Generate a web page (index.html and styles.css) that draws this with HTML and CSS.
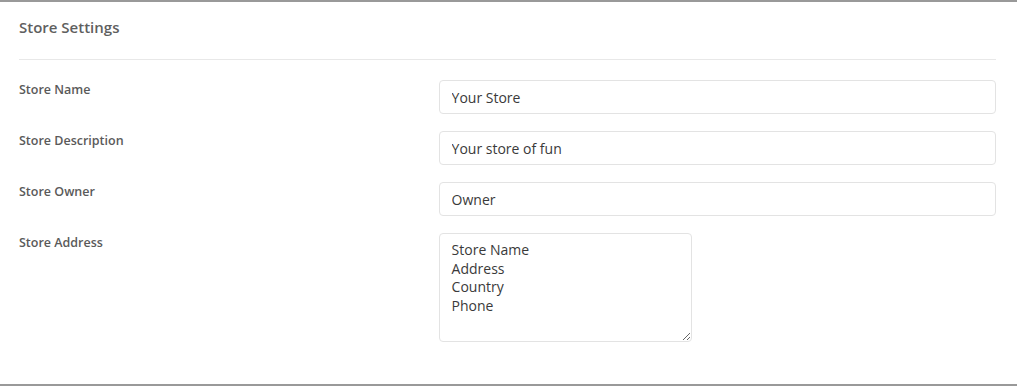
FILE: index.html
```html
<!DOCTYPE html>
<html lang="en">
<head>
  <meta charset="UTF-8">
  <title>Store Settings</title>
  <link rel="stylesheet" href="styles.css">
</head>
<body>
  <div class="panel">
    <div class="panel-heading">Store Settings</div>

    <form class="settings-form">
      <div class="form-group">
        <label class="control-label" for="storeName">Store Name</label>
        <div class="control">
          <input type="text" id="storeName" class="form-control" value="Your Store">
        </div>
      </div>

      <div class="form-group">
        <label class="control-label" for="storeDesc">Store Description</label>
        <div class="control">
          <input type="text" id="storeDesc" class="form-control" value="Your store of fun">
        </div>
      </div>

      <div class="form-group">
        <label class="control-label" for="storeOwner">Store Owner</label>
        <div class="control">
          <input type="text" id="storeOwner" class="form-control" value="Owner">
        </div>
      </div>

      <div class="form-group">
        <label class="control-label" for="storeAddress">Store Address</label>
        <div class="control">
          <textarea id="storeAddress" class="form-control address">Store Name
Address
Country
Phone</textarea>
        </div>
      </div>
    </form>
  </div>
</body>
</html>
```

FILE: styles.css
```css
body { margin: 0; background: #fff; font-family: "Open Sans", "DejaVu Sans", sans-serif; color: #555; }
.panel { border-top: 2px solid #999; border-bottom: 2px solid #999; padding: 0 21px 0 19px; height: 382px; }
.panel-heading { font-size: 15px; font-weight: 600; line-height: 22px; color: #5f5f5f; padding: 14px 0 21px; border-bottom: 1px solid #e8e8e8; }
.settings-form { padding-top: 20px; }
.form-group { display: flex; margin: 0 -15px 17px; }
.control-label { width: 41.6667%; box-sizing: border-box; padding: 0 15px; font-size: 12.5px; font-weight: 600; line-height: 19px; color: #5a5a5a; }
.control { width: 58.3333%; box-sizing: border-box; padding: 0 15px; }
.form-control { display: block; width: 100%; box-sizing: border-box; height: 34px; padding: 6px 12px; font-family: "Open Sans", "DejaVu Sans", sans-serif; font-size: 14px; line-height: 20px; color: #3a3a3a; background: #fff; border: 1px solid #e3e3e3; border-radius: 4px; outline: none; }
.address { width: 253px; height: 109px; padding-top: 7px; line-height: 18.67px; resize: both; }
```
